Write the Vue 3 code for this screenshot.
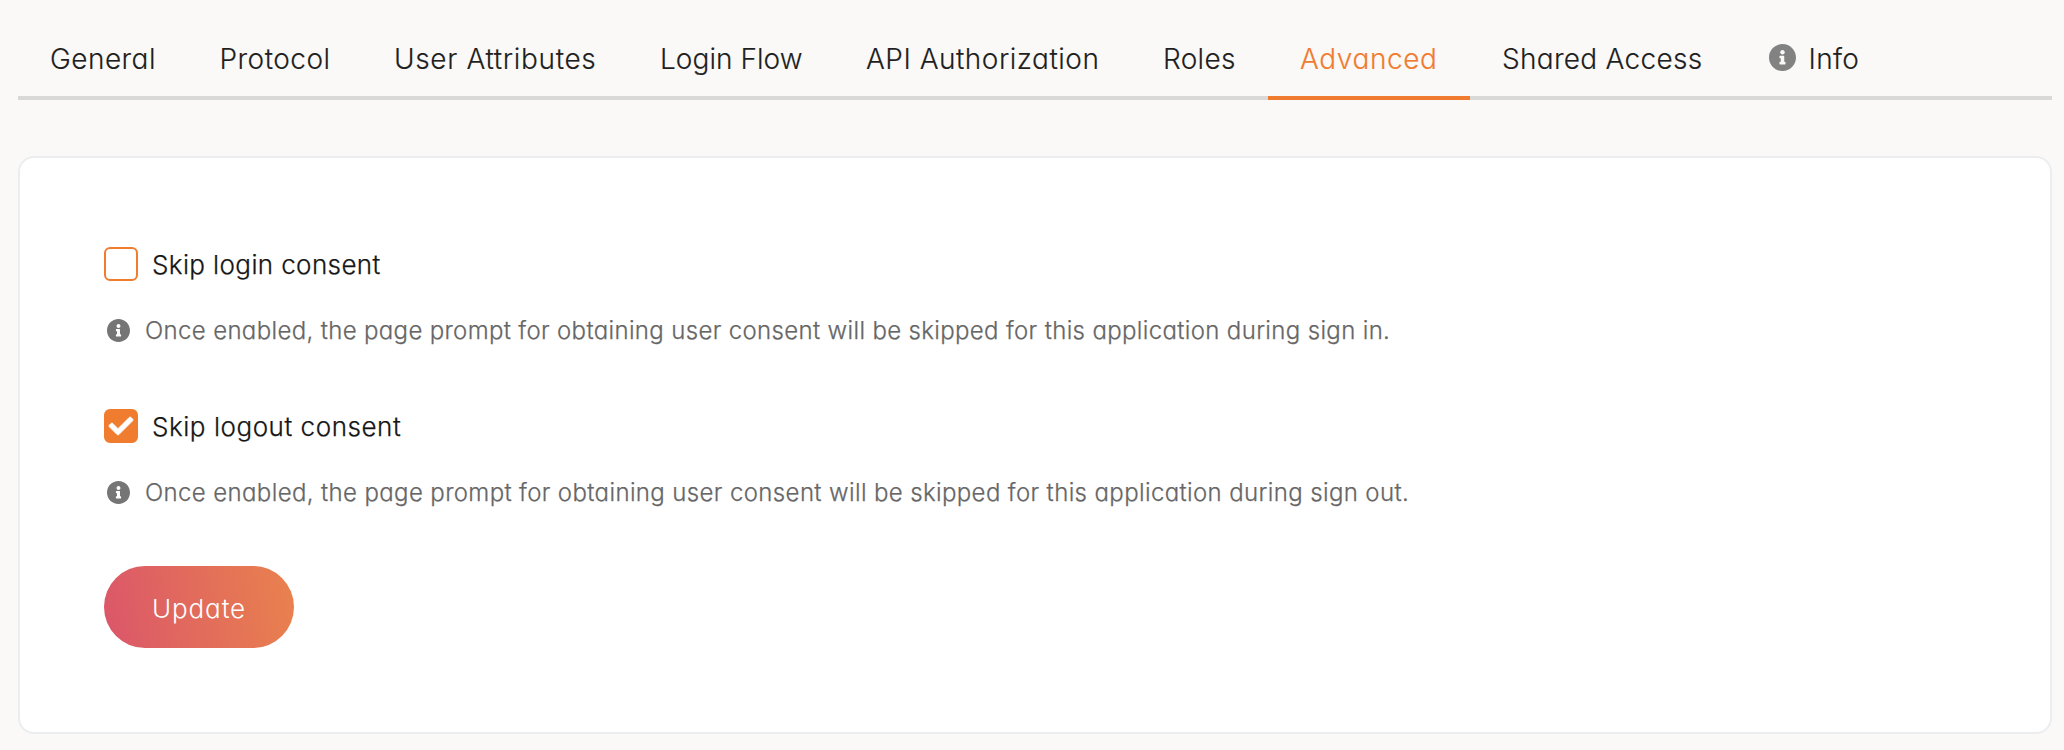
<script setup>
const tabs = [
  { label: 'General', width: 169.5, spacing: 0.45 },
  { label: 'Protocol', width: 174.5, spacing: 0.47 },
  { label: 'User Attributes', width: 266, spacing: 0.64 },
  { label: 'Login Flow', width: 206, spacing: 0.05 },
  { label: 'API Authorization', width: 297, spacing: 0.5 },
  { label: 'Roles', width: 137, spacing: 0.3 },
  { label: 'Advanced', width: 202, spacing: 0.6, active: true },
  { label: 'Shared Access', width: 262.5, spacing: 0.28 },
  { label: 'Info', width: 158, spacing: 0.3, icon: true },
]
const options = [
  {
    label: 'Skip login consent',
    spacing: 0.38,
    checked: false,
    hint: 'Once enabled, the page prompt for obtaining user consent will be skipped for this application during sign in.',
    hintSpacing: 0.345,
  },
  {
    label: 'Skip logout consent',
    spacing: 0.54,
    checked: true,
    hint: 'Once enabled, the page prompt for obtaining user consent will be skipped for this application during sign out.',
    hintSpacing: 0.37,
  },
]
const infoPath =
  'M256 8C119 8 8 119 8 256s111 248 248 248 248-111 248-248S393 8 256 8zm0 110c23.200 0 42 18.800 42 42s-18.800 42-42 42-42-18.800-42-42 18.800-42 42-42zm56 254c0 6.600-5.400 12-12 12h-88c-6.600 0-12-5.400-12-12v-24c0-6.600 5.400-12 12-12h12v-64h-12c-6.600 0-12-5.400-12-12v-24c0-6.600 5.400-12 12-12h64c6.600 0 12 5.400 12 12v100h12c6.600 0 12 5.400 12 12v24z'
</script>

<template>
  <main class="page">
    <nav class="tabs">
      <a
        v-for="t in tabs"
        :key="t.label"
        class="tab"
        :class="{ active: t.active }"
        :style="{ width: t.width + 'px', letterSpacing: t.spacing + 'px' }"
      >
        <svg v-if="t.icon" class="tab-icon" viewBox="8 8 496 496"><path :d="infoPath" /></svg>
        <span>{{ t.label }}</span>
      </a>
    </nav>
    <section class="card">
      <div v-for="o in options" :key="o.label" class="option">
        <label class="row">
          <span class="box" :class="{ checked: o.checked }">
            <svg v-if="o.checked" class="check" viewBox="0 0 512 512">
              <path d="M173.900 439.400l-166.400-166.400c-10-10-10-26.200 0-36.200l36.200-36.200c10-10 26.200-10 36.200 0L192 312.700 432.100 72.600c10-10 26.200-10 36.200 0l36.200 36.200c10 10 10 26.200 0 36.200l-294.400 294.400c-10 10-26.200 10-36.200 0z" />
            </svg>
          </span>
          <span class="text" :style="{ letterSpacing: o.spacing + 'px' }">{{ o.label }}</span>
        </label>
        <p class="hint">
          <svg class="hint-icon" viewBox="8 8 496 496"><path :d="infoPath" /></svg>
          <span class="text" :style="{ letterSpacing: o.hintSpacing + 'px' }">{{ o.hint }}</span>
        </p>
      </div>
      <button class="update" type="button">Update</button>
    </section>
  </main>
</template>

<style>
body {
  background: #faf9f7;
}
</style>

<style scoped>
.page {
  box-sizing: border-box;
  height: 750px;
  padding: 20px 12px 16px 18px;
  font-family: Inter, 'Liberation Sans', sans-serif;
  font-weight: 300;
  font-feature-settings: 'cv11';
  white-space: nowrap;
  background: #faf9f7;
}
.tabs {
  display: flex;
  box-sizing: border-box;
  height: 80px;
  box-shadow: inset 0 -4px #d9d9d8;
}
.tab {
  display: flex;
  box-sizing: border-box;
  height: 80px;
  padding: 22px 0 0 32px;
  font-size: 28px;
  line-height: 34px;
  color: #1f1f1f;
  -webkit-text-stroke: 0.15px;
}
.tab.active {
  color: #f07c30;
  border-bottom: 4px solid #f07c30;
}
.tab-icon {
  width: 27px;
  height: 27px;
  margin: 2px 13px 0 4px;
  fill: #828282;
}
.card {
  box-sizing: border-box;
  height: 578px;
  margin-top: 56px;
  padding: 89px 84px;
  background: #fff;
  border: 2px solid #ebedef;
  border-radius: 16px;
}
.option {
  height: 162px;
}
.row {
  display: flex;
  align-items: center;
  height: 34px;
  font-size: 26px;
  line-height: 34px;
  color: #151515;
}
.text {
  padding-top: 2px;
  -webkit-text-stroke: 0.25px;
}
.box {
  display: flex;
  align-items: center;
  justify-content: center;
  box-sizing: border-box;
  width: 34px;
  height: 34px;
  margin-right: 14px;
  border: 2px solid #f07c30;
  border-radius: 6px;
}
.box.checked {
  background: #f07c30;
}
.check {
  width: 24px;
  height: 24px;
  fill: #fff;
  stroke: #fff;
  stroke-width: 18;
  overflow: visible;
}
.hint {
  display: flex;
  align-items: center;
  height: 32px;
  margin: 33px 0 0 3px;
  font-size: 24px;
  line-height: 32px;
  color: #666;
}
.hint-icon {
  width: 23px;
  height: 23px;
  margin-right: 15px;
  fill: #757575;
}
.update {
  width: 190px;
  height: 82px;
  margin: -5px 0 0;
  padding: 2px 0 0;
  font: inherit;
  font-size: 26px;
  letter-spacing: 0.9px;
  font-feature-settings: 'cv11';
  color: #fff;
  background: linear-gradient(80deg, #db566a, #e9824d);
  border: 0;
  border-radius: 41px;
}
</style>
